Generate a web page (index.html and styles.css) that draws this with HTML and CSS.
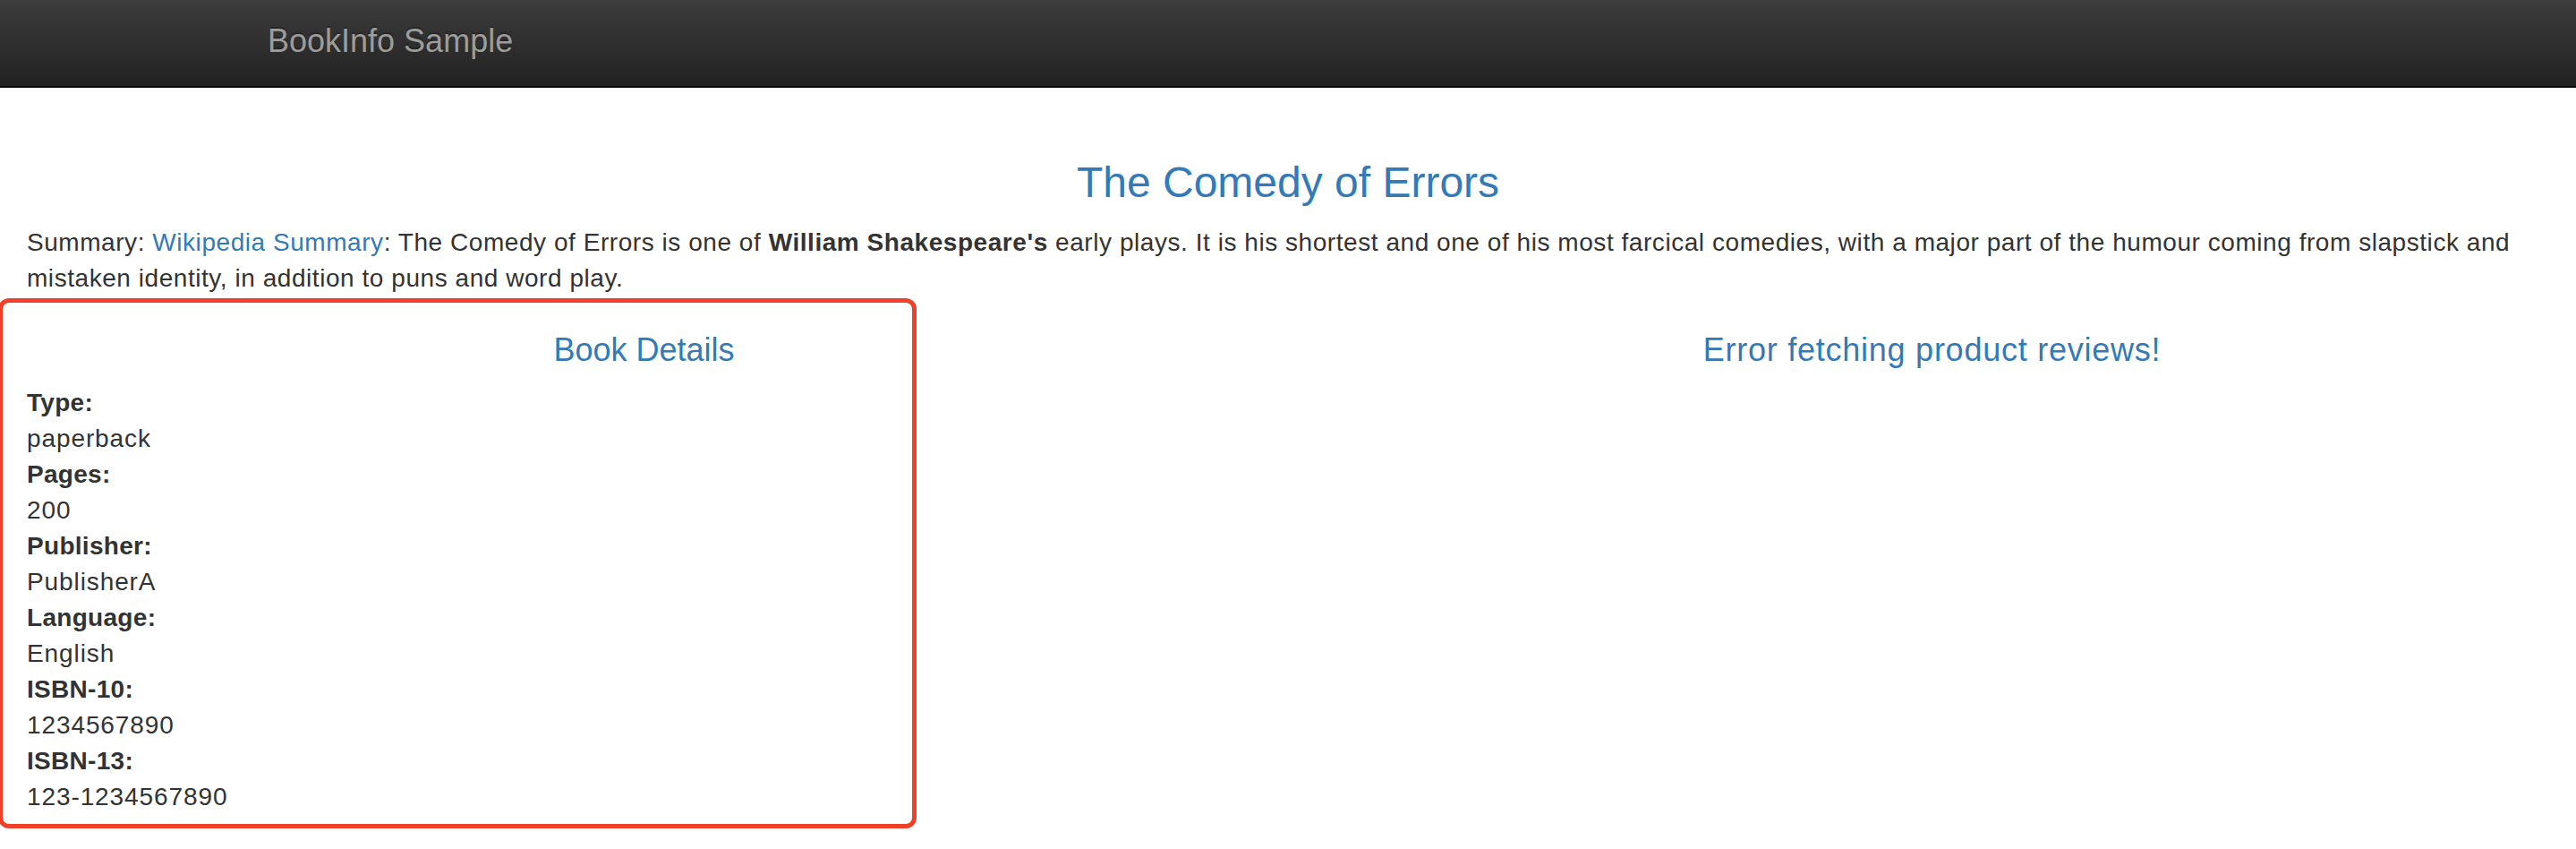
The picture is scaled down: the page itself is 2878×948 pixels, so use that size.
FILE: index.html
```html
<!DOCTYPE html>
<html lang="en">
<head>
<meta charset="utf-8">
<title>Simple Bookstore App</title>
<link rel="stylesheet" href="styles.css">
</head>
<body>
<nav class="navbar">
  <div class="navbar-container">
    <a class="navbar-brand" href="#">BookInfo Sample</a>
  </div>
</nav>
<main class="container-fluid">
  <section class="row-full">
    <h3 class="title">The Comedy of Errors</h3>
    <p class="summary">Summary: <a href="#">Wikipedia Summary</a>: The Comedy of Errors is one of <b>William Shakespeare's</b> early plays. It is his shortest and one of his most farcical comedies, with a major part of the humour coming from slapstick and mistaken identity, in addition to puns and word play.</p>
  </section>
  <section class="row-split">
    <div class="col">
      <h4 class="subtitle">Book Details</h4>
      <dl class="details">
        <dt>Type:</dt><dd>paperback</dd>
        <dt>Pages:</dt><dd>200</dd>
        <dt>Publisher:</dt><dd>PublisherA</dd>
        <dt>Language:</dt><dd>English</dd>
        <dt>ISBN-10:</dt><dd>1234567890</dd>
        <dt>ISBN-13:</dt><dd>123-1234567890</dd>
      </dl>
    </div>
    <div class="col">
      <h4 class="subtitle subtitle-wide">Error fetching product reviews!</h4>
    </div>
  </section>
</main>
<div class="annotation"></div>
</body>
</html>
```

FILE: styles.css
```css
* { box-sizing: border-box; }

html, body {
  margin: 0;
  padding: 0;
  background: #fff;
}

body {
  position: relative;
  font-family: "Liberation Sans", Arial, Helvetica, sans-serif;
  font-size: 28px;
  line-height: 40px;
  color: #333;
}

.navbar {
  height: 98px;
  background: linear-gradient(to bottom, #3c3c3c 0%, #222 100%);
  border-bottom: 2px solid #080808;
  margin-bottom: 40px;
}

.navbar-container {
  width: 2340px;
  margin: 0 auto;
  padding: 0 30px;
}

.navbar-brand {
  display: inline-block;
  padding: 26px 30px 30px;
  margin-left: -30px;
  font-size: 36px;
  line-height: 40px;
  color: #9d9d9d;
  text-decoration: none;
  text-shadow: 0 -2px 0 rgba(0, 0, 0, 0.25);
}

.container-fluid {
  padding: 0 30px;
}

.row-full {
  display: flow-root;
}

.title {
  margin: 40px 0 20px;
  font-size: 48px;
  line-height: 52.8px;
  font-weight: 500;
  text-align: center;
  color: #337ab7;
}

.summary {
  margin: 0 0 20px;
  letter-spacing: 0.55px;
}

.summary a {
  color: #337ab7;
  text-decoration: none;
}

.summary b {
  font-weight: 700;
}

.row-split {
  display: grid;
  grid-template-columns: 1fr 1fr;
  margin: 0 -30px;
}

.col {
  padding: 0 30px;
  display: flow-root;
}

.subtitle {
  margin: 20px 0 20px;
  font-size: 36px;
  line-height: 39.6px;
  font-weight: 500;
  text-align: center;
  color: #337ab7;
}

.subtitle-wide {
  letter-spacing: 0.75px;
}

.details {
  margin: 0 0 40px;
}

.details dt {
  font-weight: 700;
  letter-spacing: 0.3px;
}

.details dd {
  margin: 0;
  letter-spacing: 0.9px;
}

.annotation {
  position: absolute;
  left: -2px;
  top: 333px;
  width: 1026px;
  height: 592px;
  border: 5px solid #ef4129;
  border-radius: 12px;
  pointer-events: none;
}
```
